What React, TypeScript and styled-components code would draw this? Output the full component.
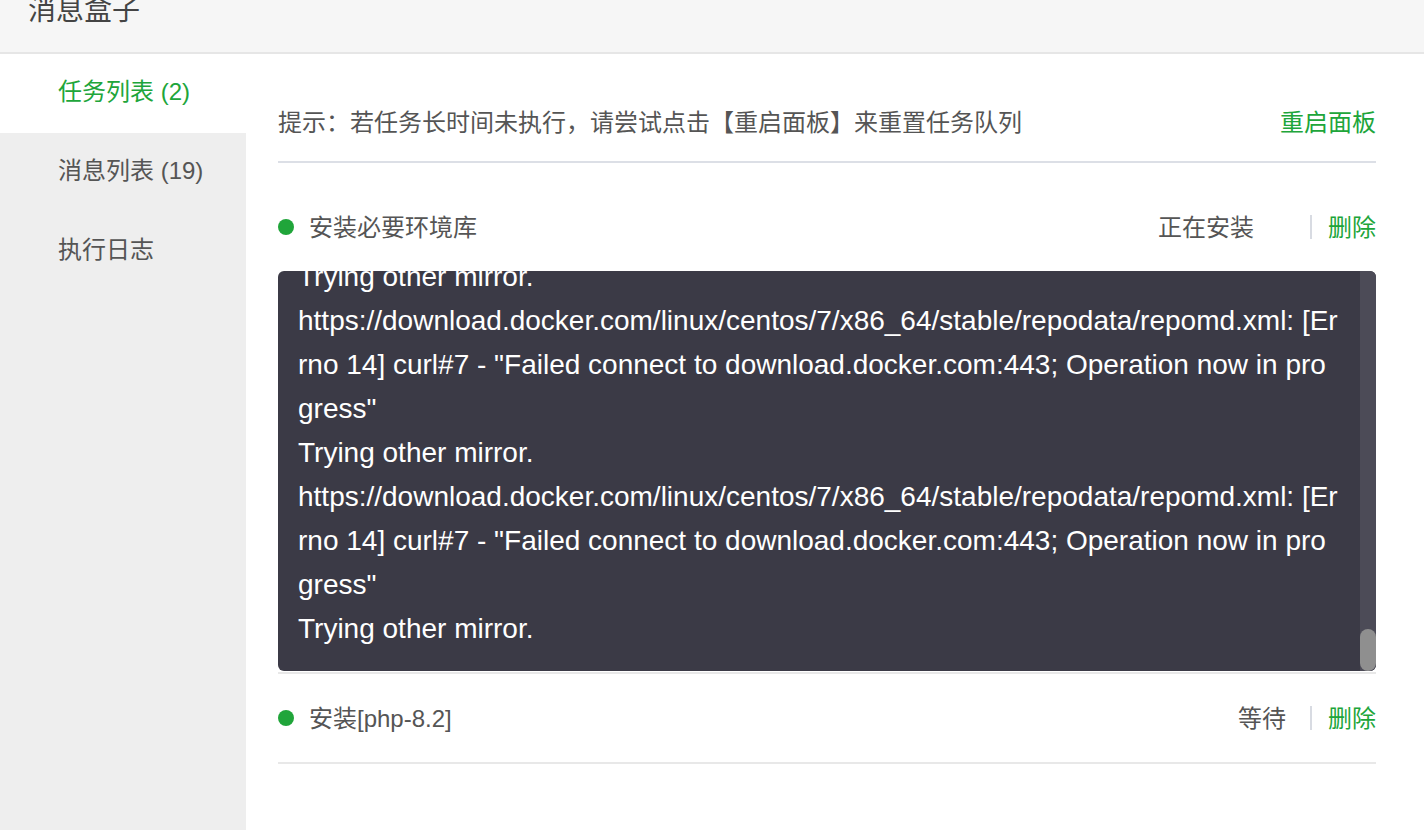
import React, { useLayoutEffect, useRef } from 'react';
import styled, { createGlobalStyle } from 'styled-components';

const GlobalStyle = createGlobalStyle`
  html, body {
    margin: 0;
    padding: 0;
    height: 100%;
    overflow: hidden;
    background: #fff;
    font-family: "Liberation Sans", "Noto Sans CJK SC", sans-serif;
  }
  #root {
    height: 100%;
  }
`;

const green = '#20a53a';

const Page = styled.div`
  display: flex;
  flex-direction: column;
  height: 100vh;
`;

const Header = styled.div`
  height: 52px;
  flex-shrink: 0;
  background: #f6f6f6;
  border-bottom: 2px solid #e6e6e6;
  padding: 0 28px;
  overflow: hidden;
`;

const Title = styled.div`
  margin-top: -7px;
  font-size: 28px;
  line-height: 36px;
  color: #444;
`;

const Body = styled.div`
  flex: 1;
  display: flex;
  min-height: 0;
`;

const Sidebar = styled.div`
  width: 246px;
  flex-shrink: 0;
  background: #eeeeee;
  display: flex;
  flex-direction: column;
`;

const NavItem = styled.div<{ $active?: boolean }>`
  height: 79px;
  box-sizing: border-box;
  display: flex;
  align-items: center;
  padding: 0 0 8px 58px;
  font-size: 24px;
  color: ${(p) => (p.$active ? green : '#555')};
  background: ${(p) => (p.$active ? '#fff' : 'transparent')};
`;

const Main = styled.div`
  flex: 1;
  padding: 30px 48px 0 32px;
  display: flex;
  flex-direction: column;
`;

const Tip = styled.div`
  height: 73px;
  padding-bottom: 4px;
  display: flex;
  align-items: center;
  justify-content: space-between;
  border-bottom: 2px solid #dcdfe6;
  font-size: 24px;
  color: #555;
`;

const GreenLink = styled.span`
  color: ${green};
  cursor: pointer;
`;

const TaskList = styled.div`
  margin-top: 20px;
  display: flex;
  flex-direction: column;
`;

const TaskItem = styled.div`
  border-bottom: 2px solid #e8e8e8;
`;

const TaskRow = styled.div`
  height: 85px;
  padding-bottom: 3px;
  display: flex;
  align-items: center;
  font-size: 24px;
  color: #555;
`;

const Dot = styled.span`
  width: 16px;
  height: 16px;
  border-radius: 50%;
  background: ${green};
  margin: 2px 15px 0 0;
  flex-shrink: 0;
`;

const TaskName = styled.span`
  flex: 1;
`;

const Status = styled.span<{ $gap: number }>`
  margin-right: ${(p) => p.$gap}px;
  color: #555;
`;

const Sep = styled.span`
  width: 2px;
  height: 24px;
  margin-top: 2px;
  background: #d8dbe2;
  margin-right: 16px;
`;

const LogBox = styled.div`
  height: 400px;
  display: flex;
  background: #3b3a46;
  border-radius: 6px;
  overflow: hidden;
  margin-bottom: 1px;
`;

const LogScroll = styled.div`
  flex: 1;
  min-width: 0;
  height: 100%;
  box-sizing: border-box;
  padding: 20px;
  overflow: hidden;
  color: #fff;
  font-size: 28px;
  line-height: 44px;
  white-space: pre-wrap;
  word-break: break-all;
`;

const ScrollTrack = styled.div`
  width: 16px;
  flex-shrink: 0;
  background: #4c4b57;
  display: flex;
  flex-direction: column;
  justify-content: flex-end;
`;

const ScrollThumb = styled.div`
  height: 42px;
  border-radius: 8px;
  background: #8f8f8f;
`;

const urlLine =
  'https://download.docker.com/linux/centos/7/x86_64/stable/repodata/repomd.xml: [Errno 14] curl#7 - "Failed connect to download.docker.com:443; Operation now in progress"';

const buildLog = () => {
  const lines: string[] = [
    'Loaded plugins: fastestmirror',
    'Loading mirror speeds from cached hostfile',
    'docker-ce-stable | 3.5 kB  00:00:00',
  ];
  for (let i = 0; i < 20; i++) {
    lines.push(urlLine);
    lines.push('Trying other mirror.');
  }
  return lines.join('\n');
};

const Log: React.FC = () => {
  const ref = useRef<HTMLDivElement>(null);
  useLayoutEffect(() => {
    if (ref.current) ref.current.scrollTop = ref.current.scrollHeight;
  }, []);
  return (
    <LogBox>
      <LogScroll ref={ref}>{buildLog()}</LogScroll>
      <ScrollTrack>
        <ScrollThumb />
      </ScrollTrack>
    </LogBox>
  );
};

const navItems = [
  { label: '任务列表 (2)', active: true },
  { label: '消息列表 (19)' },
  { label: '执行日志' },
];

export default function App() {
  return (
    <Page>
      <GlobalStyle />
      <Header>
        <Title>消息盒子</Title>
      </Header>
      <Body>
        <Sidebar>
          {navItems.map((n) => (
            <NavItem key={n.label} $active={n.active}>
              {n.label}
            </NavItem>
          ))}
        </Sidebar>
        <Main>
          <Tip>
            <span>提示：若任务长时间未执行，请尝试点击【重启面板】来重置任务队列</span>
            <GreenLink>重启面板</GreenLink>
          </Tip>
          <TaskList>
            <TaskItem>
              <TaskRow>
                <Dot />
                <TaskName>安装必要环境库</TaskName>
                <Status $gap={56}>正在安装</Status>
                <Sep />
                <GreenLink>删除</GreenLink>
              </TaskRow>
              <Log />
            </TaskItem>
            <TaskItem>
              <TaskRow>
                <Dot />
                <TaskName>安装[php-8.2]</TaskName>
                <Status $gap={24}>等待</Status>
                <Sep />
                <GreenLink>删除</GreenLink>
              </TaskRow>
            </TaskItem>
          </TaskList>
        </Main>
      </Body>
    </Page>
  );
}
